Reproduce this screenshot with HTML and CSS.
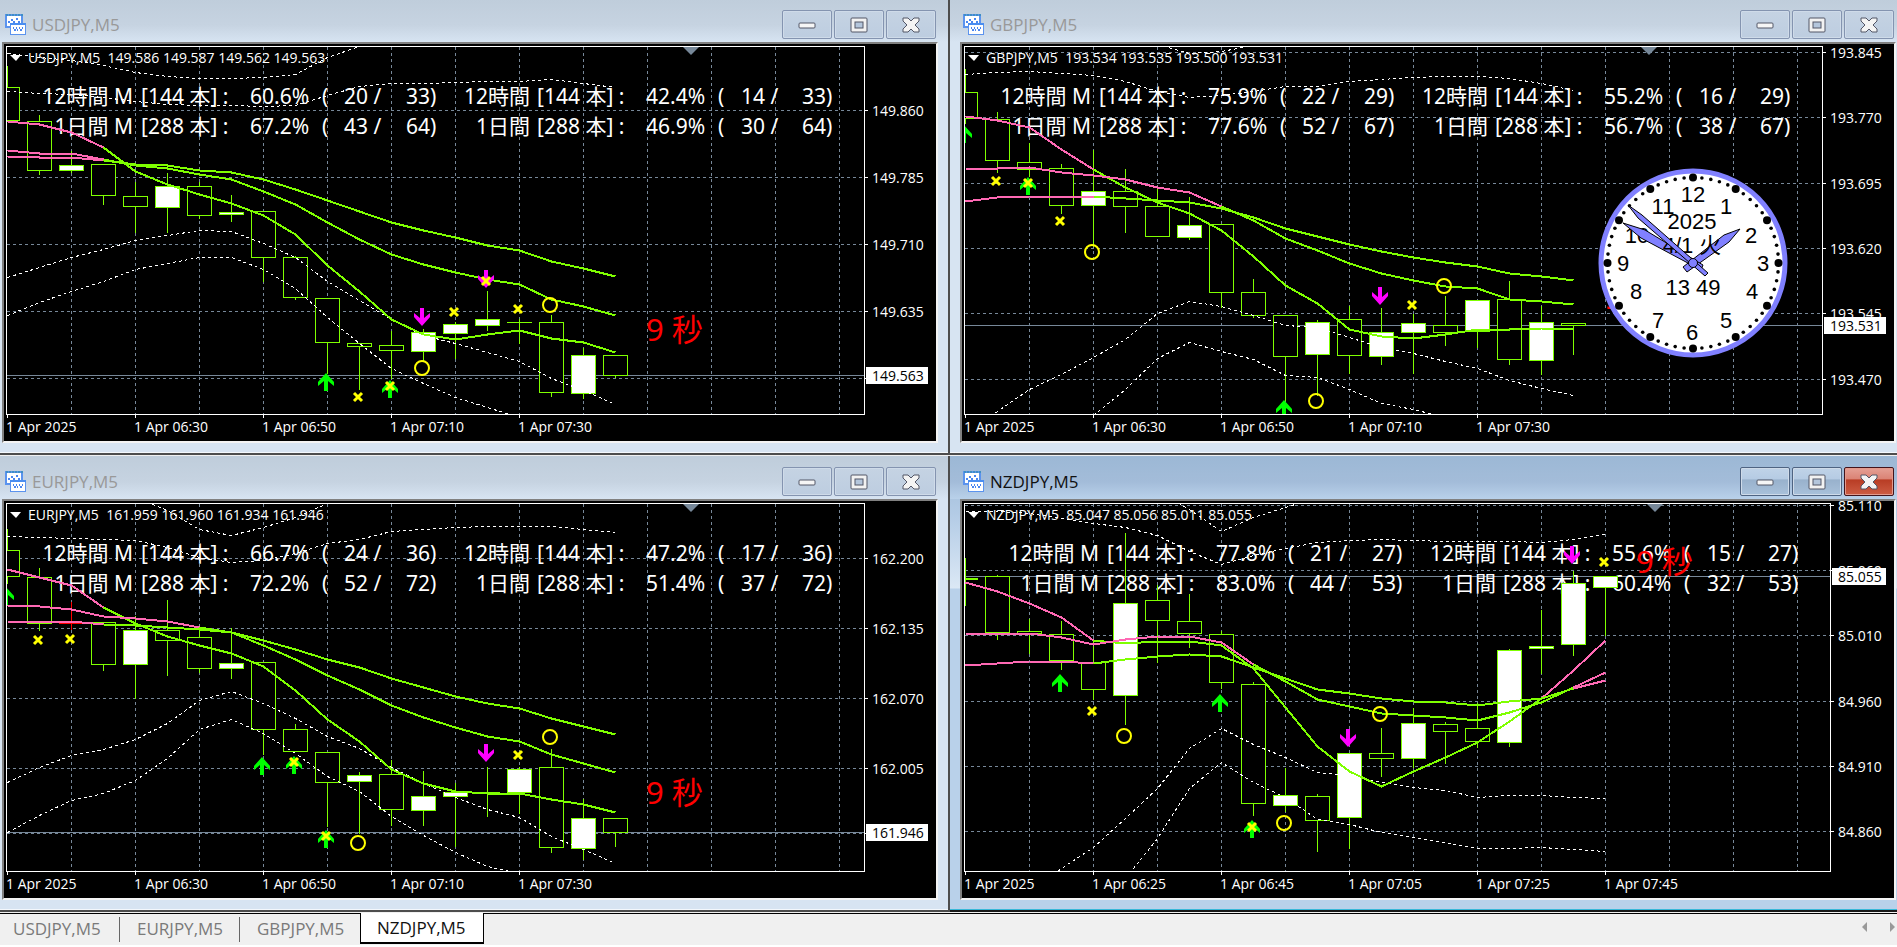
FILE: index.html
```html
<!DOCTYPE html>
<html lang="ja">
<head>
  <meta charset="UTF-8" />
  <meta name="viewport" content="width=device-width, initial-scale=1.0" />
  <title>NZDJPY,M5</title>
  <link rel="stylesheet" href="styles.css">
</head>
<body>
  <main class="workspace" id="workspace"></main>

  <nav class="tabbar">
    <div class="tabs">
      <button class="tab">USDJPY,M5</button>
      <button class="tab">EURJPY,M5</button>
      <button class="tab">GBPJPY,M5</button>
      <button class="tab current">NZDJPY,M5</button>
    </div>
    <div class="scrollers">
      <button class="scroller" aria-label="Scroll left"><svg width="5" height="10"><path d="M5 0V10L0 5Z" /></svg></button>
      <button class="scroller" aria-label="Scroll right"><svg width="5" height="10"><path d="M0 0V10L5 5Z" /></svg></button>
    </div>
  </nav>

  <template id="windowTemplate">
    <section class="window">
      <header class="titlebar">
        <svg class="app-icon" width="21" height="21" viewBox="0 0 21 21" shape-rendering="crispEdges">
          <rect x="1" y="1" width="16" height="12" fill="#fff" stroke="#5b93ee" stroke-width="2" />
          <path d="M1 1H18" stroke="#3f8fc4" stroke-width="2" stroke-dasharray="2 1" />
          <path d="M3 8H5M6 6H8M8 8H10M11 5H13M13 8H15" stroke="#4a86f0" stroke-width="2" />
          <rect x="5" y="9" width="16" height="12" fill="#fff" />
          <rect x="5.5" y="9.5" width="15" height="11" fill="none" stroke="#5b93ee" />
          <path d="M5 10H21" stroke="#4a8df0" stroke-width="2" />
          <path d="M8 14H9M9 16H11M11 14H12M12 16H13M14 14H15M15 16H17M17 14H18" stroke="#4a86f0" stroke-width="2" />
        </svg>
        <h2 class="title"></h2>
        <div class="controls">
          <button class="control" aria-label="Minimize">
            <svg width="18" height="16"><rect x="1" y="6" width="16" height="5" rx="1" fill="#f6f6f6" stroke="#535666" /></svg>
          </button>
          <button class="control" aria-label="Maximize">
            <svg width="18" height="16">
              <rect x="1" y="1" width="16" height="14" rx="1" fill="#f2f2f2" stroke="#535666" />
              <rect x="5" y="5" width="8" height="6" fill="#b4c6dc" stroke="#535666" />
            </svg>
          </button>
          <button class="control close" aria-label="Close">
            <svg width="18" height="16"><path d="M1 1H6L9 4L12 1H17V4L13 8L17 12V15H12L9 12L6 15H1V12L5 8L1 4Z" fill="#f4f4f4" stroke="#535666" /></svg>
          </button>
        </div>
      </header>
      <div class="chart">
        <div class="plot">
          <svg class="layer grid-layer"></svg>
          <div class="stats"></div>
          <svg class="layer series-layer"></svg>
          <div class="quote"><svg width="11" height="7"><path d="M0 0H11L6 6Z" fill="#fff" /></svg><span></span></div>
        </div>
        <svg class="price-axis"></svg>
        <svg class="time-axis"></svg>
      </div>
    </section>
  </template>

  <script src="charts.js"></script>
</body>
</html>
```
FILE: styles.css
```css
* {
  box-sizing: border-box;
}

body {
  margin: 0;
  height: 100vh;
  display: flex;
  flex-direction: column;
  overflow: hidden;
  background: #f0f0f0;
  font-family: "Open Sans", "Noto Sans CJK JP", sans-serif;
}

/* the outer windows run a few pixels past the edges of the workspace */
.workspace {
  flex: 1;
  min-height: 0;
  display: grid;
  grid-template-columns: 1fr 1fr;
  grid-template-rows: 1fr 1fr;
  margin: -1px -11px 0 -8px;
}

.window {
  display: flex;
  flex-direction: column;
  min-width: 0;
  min-height: 0;
  background: #d7e4f2;
  border-right: 2px solid #4d4d4d;
  border-bottom: 2px solid #4d4d4d;
  box-shadow: inset 0 -1px #f4f8fc;
  margin-bottom: 1px;
  padding: 0 10px 10px;
}

.window.active {
  background: linear-gradient(#9db9d6, #b4cce6 60px, #dbe8f5 132px, #b9d1ea 133px);
  border-bottom-color: #1a1a1a;
  box-shadow: inset 0 -1px #39b8d8;
}

.titlebar {
  flex: none;
  height: 43px;
  display: flex;
  align-items: center;
  gap: 6px;
  margin: 0 -10px;
  padding: 8px 12px 0 13px;
  background: linear-gradient(#bfcddb, #c6d3e1 60%, #d7e4f2);
}

.active .titlebar {
  background: linear-gradient(#9cb8d5, #a3bcd9 60%, #b9d1ea);
}

.title {
  flex: 1;
  margin: 0;
  font-size: 17px;
  font-weight: 400;
  line-height: 24px;
  color: #999;
}

.active .title {
  color: #111;
}

.controls {
  display: flex;
  gap: 2px;
}

.control {
  width: 50px;
  height: 29px;
  padding: 0;
  display: grid;
  place-items: center;
  border: 1px solid #8494b0;
  border-radius: 2px;
  background: linear-gradient(#c5d3e3, #bdcde0);
  box-shadow: inset 0 0 0 1px #cfdbe9;
}

.active .control {
  border-color: #4f6482;
  background: linear-gradient(#c0d3e8, #b5cbe3 42%, #98b1cc 43%, #a9c1da);
}

.active .close {
  border-color: #43141b;
  background: linear-gradient(#e5a095, #da8274 42%, #b83c24 43%, #cd5d44);
  box-shadow: inset 0 0 0 1px #e39a8d;
}

.chart {
  flex: 1;
  min-height: 0;
  display: grid;
  grid-template-columns: 1fr auto;
  grid-template-rows: 1fr 26px;
  padding: 2px 0 0 2px;
  background: #000;
  border: 2px solid #808080;
  border-right-color: #f4f4f4;
  border-bottom-color: #f4f4f4;
}

.plot {
  position: relative;
  overflow: hidden;
  border: 1px solid #fff;
}

.layer {
  position: absolute;
  inset: 0;
  width: 100%;
  height: 100%;
}

.price-axis {
  width: 71px;
  height: 100%;
  font-size: 14px;
  fill: #fff;
  overflow: visible;
}

.price-axis.narrow {
  width: 63px;
}

.time-axis {
  grid-column: 1 / -1;
  width: 100%;
  height: 26px;
  font-size: 14px;
  fill: #fff;
}

.tick {
  fill: none;
  stroke: #fff;
}

.price-tag text {
  fill: #000;
}

.gridline {
  stroke: #778899;
  stroke-dasharray: 3 3;
}

.bid-line {
  stroke: #778899;
}

.quote {
  position: absolute;
  left: 3px;
  top: 1px;
  display: flex;
  align-items: center;
  gap: 7px;
  font-size: 14px;
  line-height: 20px;
  color: #fff;
  white-space: pre;
}

.stats {
  position: absolute;
  top: 34px;
  right: 0;
  display: grid;
  grid-template-columns: 87px 8px 109px 72px 22px 62px 59px 65px 7px 109px 72px 23px 61px 62px;
  grid-auto-rows: 30px;
  font-family: "Noto Sans", "Noto Sans CJK JP", sans-serif;
  font-size: 21px;
  line-height: 30px;
  color: #fff;
  white-space: pre;
}

.stats .label {
  display: flex;
  justify-content: flex-end;
}

.candle {
  stroke: #7fff00;
  fill: #000;
}

.candle.bull {
  fill: #fff;
}

.candle.flat {
  stroke: #f00;
}

.band {
  fill: none;
  stroke: #fff;
  stroke-dasharray: 3 3;
}

.average {
  fill: none;
  stroke: #7fff00;
  stroke-width: 2;
}

.average.rising {
  stroke: #ff69b4;
}

.up {
  fill: #00ff00;
}

.down {
  fill: #ff00ff;
}

.cross,
.ring {
  fill: none;
  stroke: #ffff00;
  stroke-width: 2;
}

.cross {
  stroke-width: 3;
}

.countdown {
  fill: #f00;
  font-size: 31px;
  font-family: "Noto Sans", "Noto Sans CJK JP", sans-serif;
}

.clock {
  position: absolute;
  top: 120px;
  right: 33px;
  font-family: "Liberation Sans", "Noto Sans CJK JP", sans-serif;
  font-size: 22px;
}

.clock text {
  text-anchor: middle;
}

.hand {
  fill: #8080ff;
  stroke: #000;
}

.tabbar {
  flex: none;
  height: 34px;
  display: flex;
  justify-content: space-between;
  background: #f0f0f0;
  border-top: 1px solid #000;
  border-bottom: 2px solid #fff;
}

.tabs {
  display: flex;
  height: 30px;
  margin-left: -4px;
}

.tab {
  position: relative;
  min-width: 120px;
  padding: 0 14px 0 17px;
  border: 0;
  background: none;
  font-family: inherit;
  font-size: 17px;
  line-height: 28px;
  text-align: left;
  color: #7a7a7a;
}

.tab:first-child {
  min-width: 124px;
}

.tab:nth-child(-n+2)::after {
  content: "";
  position: absolute;
  right: 0;
  top: 3px;
  bottom: 2px;
  border-right: 1px solid #666;
}

.tab.current {
  margin-top: -1px;
  background: #fff;
  border: 1px solid #000;
  border-top: 0;
  border-bottom-width: 2px;
  padding: 0 17px 0 16px;
  color: #111;
}

.scrollers {
  display: flex;
  gap: 23px;
  align-items: center;
  padding: 0 2px 6px 0;
}

.scroller {
  display: block;
  padding: 0;
  border: 0;
  background: none;
  line-height: 0;
}

.scroller path {
  fill: #999;
}
```
FILE: charts.js
```javascript
// candle rows: [high, body top, body bottom, low, bull]
// y values are plot pixels, one bar every 32px
const BAR = 32;
const ORIGIN_Y = 47;

const charts = [
  {
    symbol: "USDJPY,M5",
    quote: "149.586 149.587 149.562 149.563",
    stats: [["60.6%", "20 /", "33)", "42.4%", "14 /", "33)"], ["67.2%", "43 /", "64)", "46.9%", "30 /", "64)"]],
    prices: [[110, "149.860"], [177, "149.785"], [244, "149.710"], [311, "149.635"], [378, ""]],
    bid: [375, "149.563"],
    times: ["1 Apr 2025", "1 Apr 06:30", "1 Apr 06:50", "1 Apr 07:10", "1 Apr 07:30"],
    shift: 691,
    countdown: [646, 341],
    candles: [[65,87,120,120,0],[114,121,170,174,0],[150,165,170,172,1],[164,164,195,204,0],[181,196,206,232,0],[172,186,207,232,1],[181,186,215,218,0],[194,212,214,221,1],[211,211,257,281,0],[255,257,297,299,0],[298,298,342,373,0],[342,343,346,389,0],[330,345,350,378,0],[328,332,351,360,1],[321,324,333,358,1],[290,319,325,330,1],[318,322,322,343,0],[314,322,392,396,0],[347,355,393,398,1],[354,355,375,377,0]],
    averages: [
      { rising: [[0, 3]], y: [121,124,132,147,171,184,194,203,215,234,265,291,319,334,339,334,330,338,342,352] },
      { rising: [[0, 3]], y: [150,153,153,159,165,168,174,179,191,204,222,239,254,264,272,279,284,299,306,315] },
      { rising: [[0, 3]], y: [156,157,157,160,164,165,170,172,179,189,200,211,222,230,237,245,250,261,268,276] }
    ],
    bands: [
      [0, 53,57,60,65,72,76,78,78,77,74,57,46,36],
      [0, 91,93,94,97,101,104,105,105,106,105,95,86,83,83,82,81,81,79,83,87],
      [0, 277,267,257,249,240,235,230,231,243,257,281,300,319,335,343,352,361,378,390,404],
      [0, 315,302,291,281,269,263,257,257,269,288,317,343,368,383,397,407,417]
    ],
    marks: [["up",10,373],["cross",11,397],["up",12,380],["cross",12,386],["down",13,308],["ring",13,368],["cross",14,312],["down",15,270],["cross",15,281],["cross",16,309],["ring",17,305]]
  },
  {
    symbol: "GBPJPY,M5",
    quote: "193.534 193.535 193.500 193.531",
    stats: [["75.9%", "22 /", "29)", "55.2%", "16 /", "29)"], ["77.6%", "52 /", "67)", "56.7%", "38 /", "67)"]],
    prices: [[52, "193.845"], [117, "193.770"], [183, "193.695"], [248, "193.620"], [313, "193.545"], [379, "193.470"]],
    bid: [325, "193.531"],
    times: ["1 Apr 2025", "1 Apr 06:30", "1 Apr 06:50", "1 Apr 07:10", "1 Apr 07:30"],
    shift: 691,
    countdown: [646, 309],
    clock: true,
    candles: [[68,92,118,123,0],[111,119,160,172,0],[142,162,169,176,0],[163,168,205,213,0],[149,191,205,246,1],[168,191,206,232,0],[187,206,236,236,0],[196,225,237,239,1],[224,224,292,307,0],[278,292,315,317,0],[315,315,356,400,0],[319,322,354,395,1],[305,319,355,373,0],[307,332,356,364,1],[313,323,332,373,1],[295,325,332,345,0],[300,300,331,347,1],[280,299,359,364,0],[305,322,360,374,1],[322,323,325,354,0]],
    averages: [
      { rising: [[0, 4]], y: [116,120,127,149,169,187,202,213,230,256,285,303,329,336,338,334,329,329,328,328] },
      { rising: [[0, 8]], y: [168,168,167,172,175,179,187,192,206,220,238,250,263,273,280,286,288,299,301,304] },
      { rising: [[0, 4]], y: [201,197,196,196,196,198,200,202,208,217,228,236,244,251,257,262,266,273,276,280] }
    ],
    bands: [
      [6, 44,53,51,45],
      [0, 74,72,71,73,75,81,91,97,95,91,86,86,81,79,77,76,76,78,83,90],
      [0, 432,411,389,374,357,339,313,301,306,315,325,327,337,347,353,361,368,380,388,395],
      [4, 415,389,358,342,351,359,375,377,389,403,409,417]
    ],
    marks: [["up",0,125],["cross",1,181],["up",2,177],["cross",2,183],["cross",3,221],["ring",4,252],["up",10,400],["ring",11,401],["down",13,287],["cross",14,305],["ring",15,286]]
  },
  {
    symbol: "EURJPY,M5",
    quote: "161.959 161.960 161.934 161.946",
    stats: [["66.7%", "24 /", "36)", "47.2%", "17 /", "36)"], ["72.2%", "52 /", "72)", "51.4%", "37 /", "72)"]],
    prices: [[101, "162.200"], [171, "162.135"], [241, "162.070"], [311, "162.005"], [376, ""]],
    bid: [375, "161.946"],
    times: ["1 Apr 2025", "1 Apr 06:30", "1 Apr 06:50", "1 Apr 07:10", "1 Apr 07:30"],
    shift: 691,
    countdown: [646, 347],
    candles: [[71,93,119,126,0],[110,120,166,173,0],[144,166,166,172,2],[165,165,207,213,0],[158,173,207,241,1],[142,173,183,218,0],[171,180,211,215,0],[170,206,211,221,1],[205,205,272,297,0],[266,272,294,294,0],[295,295,325,369,0],[314,318,324,376,1],[302,317,352,368,0],[313,339,353,368,1],[325,335,339,389,1],[309,335,335,359,0],[309,312,335,356,1],[291,310,390,395,0],[341,361,391,402,1],[360,361,375,389,0]],
    averages: [
      { rising: [[0, 3]], y: [112,120,128,150,166,179,188,196,209,233,262,284,312,326,334,336,336,342,347,355] },
      { rising: [[0, 6]], y: [148,149,152,159,161,164,170,175,188,202,218,232,248,260,270,279,284,297,306,315] },
      { rising: [[0, 3]], y: [164,164,164,167,168,170,172,175,183,192,202,210,221,230,239,246,251,261,269,277] }
    ],
    bands: [
      [4, 40,53,72,78,70,60,46],
      [0, 79,80,81,82,83,90,100,105,103,96,86,82,74,72,70,69,69,69,72,75],
      [0, 325,310,298,292,282,266,243,234,246,261,279,291,310,326,340,352,360,379,392,406],
      [0, 375,358,343,336,323,301,272,262,276,296,319,334,359,378,395,409,416]
    ],
    marks: [["up",0,130],["cross",1,183],["cross",2,182],["up",8,300],["up",9,299],["cross",9,305],["up",10,373],["cross",10,379],["ring",11,386],["down",15,287],["cross",16,298],["ring",17,280]]
  },
  {
    symbol: "NZDJPY,M5",
    quote: "85.047 85.056 85.011 85.055",
    stats: [["77.8%", "21 /", "27)", "55.6%", "15 /", "27)"], ["83.0%", "44 /", "53)", "60.4%", "32 /", "53)"]],
    prices: [[48, "85.110"], [113, "85.060"], [178, "85.010"], [244, "84.960"], [309, "84.910"], [374, "84.860"]],
    bid: [119, "85.055"],
    times: ["1 Apr 2025", "1 Apr 06:25", "1 Apr 06:45", "1 Apr 07:05", "1 Apr 07:25", "1 Apr 07:45"],
    shift: 697,
    countdown: [678, 116],
    active: true,
    candles: [[100,121,122,148,0],[117,119,175,182,0],[161,174,176,196,0],[163,177,203,212,0],[181,205,232,242,0],[75,146,238,267,1],[127,143,163,205,0],[136,164,176,190,0],[173,177,225,231,0],[224,227,346,358,0],[310,338,348,354,1],[336,339,363,394,0],[296,296,360,391,1],[270,296,301,319,0],[250,266,301,310,1],[264,267,274,306,0],[245,271,284,290,0],[191,193,285,289,1],[152,189,191,216,1],[113,126,187,198,1],[119,119,130,178,1]],
    averages: [
      { rising: [[0, 4], [18, 20]], y: [125,134,146,160,183,186,184,184,188,211,250,289,314,329,314,300,285,264,241,213,183] },
      { rising: [[0, 9], [19, 20]], y: [176,176,176,180,187,182,179,179,185,207,224,242,249,256,258,260,263,255,245,230,215] },
      { rising: [[0, 4], [19, 20]], y: [208,206,204,204,206,202,199,197,199,210,221,232,236,241,244,245,248,244,241,231,223] }
    ],
    bands: [
      [6, 34,52,74,60,50,40],
      [0, 54,54,56,61,66,70,78,94,107,98,91,85,83,82,83,84,84,84,85,82,77],
      [2, 436,411,390,361,331,291,271,287,300,315,318,325,330,333,340,338,338,340,341],
      [5, 421,381,331,305,325,340,362,367,375,380,385,391,391,390,392,394]
    ],
    marks: [["up",3,217],["cross",4,254],["ring",5,279],["up",8,237],["up",9,363],["cross",9,370],["ring",10,366],["down",12,272],["ring",13,257],["down",19,89],["cross",20,105]]
  }
];

const shapes = {
  up: "M0 0L8 9V13L2 8V18H-2V8L-8 13V9Z",
  down: "M0 18L8 9V5L2 10V0H-2V10L-8 5V9Z",
  cross: "M-4 -4L4 4M4 -4L-4 4",
  ring: "M-7 0A7 7 0 1 0 7 0A7 7 0 1 0 -7 0"
};

const barX = i => i * BAR + 0.5;

function points(values, from, to, start) {
  const list = [];
  for (let i = from; i <= to; i++) list.push(`${barX(i + start)},${values[i] - ORIGIN_Y + 0.5}`);
  return list.join(" ");
}

function drawGrid(chart) {
  let out = "";
  for (let x = 64; x < 2000; x += 64) {
    out += `<line class="gridline" x1="${x + 0.5}" x2="${x + 0.5}" y1="0" y2="100%" />`;
  }
  chart.prices.forEach(([y]) => {
    const gy = y - ORIGIN_Y + 0.5;
    out += `<line class="gridline" x1="0" x2="100%" y1="${gy}" y2="${gy}" />`;
  });
  const by = chart.bid[0] - ORIGIN_Y + 0.5;
  out += `<line class="bid-line" x1="0" x2="100%" y1="${by}" y2="${by}" />`;
  const sx = chart.shift - 7;
  out += `<path d="M${sx - 8} 0H${sx + 8}L${sx} 8Z" fill="#778899" />`;
  return out;
}

function drawSeries(chart) {
  let out = `<g shape-rendering="crispEdges">`;
  chart.candles.forEach(([high, top, bottom, low, kind], i) => {
    const x = barX(i);
    const cls = ["", " bull", " flat"][kind];
    const y = v => v - ORIGIN_Y + 0.5;
    out += `<path class="candle${cls}" d="M${x} ${y(high)}V${y(top)}M${x} ${y(bottom)}V${y(low) + 0.5}" />`;
    out += `<rect class="candle${cls}" x="${x - 12}" y="${y(top)}" width="24" height="${bottom - top || 0.01}" />`;
  });
  chart.bands.forEach(([start, ...y]) => {
    out += `<polyline class="band" points="${points(y, 0, y.length - 1, start)}" />`;
  });
  chart.averages.forEach(({ rising, y }) => {
    out += `<polyline class="average" points="${points(y, 0, y.length - 1, 0)}" />`;
    rising.forEach(([from, to]) => {
      out += `<polyline class="average rising" points="${points(y, from, to, 0)}" />`;
    });
  });
  out += `</g>`;
  chart.marks.forEach(([type, i, y]) => {
    out += `<path class="${type}" transform="translate(${i * BAR - 1} ${y - ORIGIN_Y})" d="${shapes[type]}" />`;
  });
  const [cx, cy] = chart.countdown;
  out += `<text class="countdown" x="${cx - 7}" y="${cy - ORIGIN_Y}">9 秒</text>`;
  return out;
}

function drawPrices(chart) {
  let out = "";
  chart.prices.forEach(([y, label]) => {
    const py = y - ORIGIN_Y + 1;
    out += `<path class="tick" d="M0 ${py + 0.5}H3" /><text x="7" y="${py + 6}">${label}</text>`;
  });
  const [y, label] = chart.bid;
  const by = y - ORIGIN_Y + 1;
  const width = chart.active ? 54 : 62;
  out += `<g class="price-tag"><rect x="1" y="${by - 8}" width="${width}" height="17" /><text x="7" y="${by + 6}">${label}</text></g>`;
  return out;
}

function drawTimes(chart) {
  return chart.times.map((label, i) => {
    const x = i * BAR * 4 + 1;
    return `<path class="tick" d="M${x + 0.5} 0V3" /><text x="${x - 1}" y="17">${label}</text>`;
  }).join("");
}

function statsRow(span, bars, v) {
  const side = (label, values) => [
    `<span class="label">${label}</span><span></span>`,
    `<span>[${bars} 本] :</span>`,
    `<span>${values[0]}</span><span>(</span><span>${values[1]}</span><span>${values[2]}</span>`
  ].join("");
  return side(span + " M", v.slice(0, 3)) + side(span, v.slice(3));
}

function drawClock() {
  const numbers = [[12,0,-69],[1,33,-57],[2,58,-28],[3,70,0],[4,59,28],[5,33,57],[6,-1,69],[7,-35,57],[8,-57,28],[9,-70,0],[10,-56,-28],[11,-30,-57]];
  let out = `<circle r="92" fill="#fff" stroke="#8080ff" stroke-width="5" />`;
  for (let i = 0; i < 60; i++) {
    const a = i * Math.PI / 30;
    const r = i % 5 ? 1.8 : 4;
    out += `<circle cx="${(Math.sin(a) * 85.5).toFixed(1)}" cy="${(-Math.cos(a) * 85.5).toFixed(1)}" r="${r}" />`;
  }
  numbers.forEach(([n, x, y]) => {
    out += `<text x="${x}" y="${y + 8}">${n}</text>`;
  });
  out += `<text x="-1" y="-34">2025</text><text x="0" y="32">13 49</text>`;
  out += `<path class="hand" d="M-10 4L-6 9L36 -21L47 -34L31 -28Z" />`;
  out += `<path class="hand" d="M10 2L8 7L-52 -25L-70 -40L-48 -33Z" />`;
  out += `<text x="-1" y="-10">4/1 火</text>`;
  out += `<path class="hand" d="M12 13L15 10L-51 -48L-65 -58L-55 -45Z" />`;
  out += `<circle class="hand" r="4.5" />`;
  return `<svg class="clock" width="192" height="192" viewBox="-96 -96 192 192">${out}</svg>`;
}

const workspace = document.getElementById("workspace");
const template = document.getElementById("windowTemplate");

charts.forEach(chart => {
  const node = template.content.cloneNode(true);
  const find = selector => node.querySelector(selector);

  find(".title").textContent = chart.symbol;
  find(".quote span").textContent = `${chart.symbol}  ${chart.quote}`;
  find(".grid-layer").innerHTML = drawGrid(chart);
  find(".series-layer").innerHTML = drawSeries(chart);
  find(".price-axis").innerHTML = drawPrices(chart);
  find(".time-axis").innerHTML = drawTimes(chart);
  find(".stats").innerHTML = statsRow("12時間", 144, chart.stats[0]) + statsRow("1日間", 288, chart.stats[1]);

  if (chart.clock) find(".plot").insertAdjacentHTML("beforeend", drawClock());
  if (chart.active) {
    find(".window").classList.add("active");
    find(".price-axis").classList.add("narrow");
  }
  workspace.appendChild(node);
});
```
